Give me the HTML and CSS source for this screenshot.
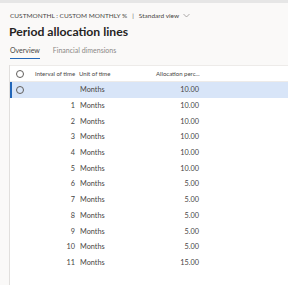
FILE: index.html
```html
<!DOCTYPE html>
<html>
<head>
  <title>Period allocation lines</title>
  <link rel="stylesheet" href="styles.css">
</head>
<body>
  <div class="topbar"></div>
  <div class="page-head">
    <div class="crumb">
      <span>CUSTMONTHL : CUSTOM MONTHLY %</span>
      <span class="sep">|</span>
      <span>Standard view</span>
      <svg class="chev" width="7" height="5" viewBox="0 0 7 5"><path d="M0.5 1 L3.5 4 L6.5 1" fill="none" stroke="#8a8886" stroke-width="0.7"/></svg>
    </div>
    <h1 class="title">Period allocation lines</h1>
    <div class="tabs">
      <span class="tab active">Overview</span>
      <span class="tab">Financial dimensions</span>
    </div>
  </div>

  <div class="body-wrap">
    <div class="side"></div>
    <div class="grid">
      <div class="row head">
        <div class="c-sel"><span class="radio"></span></div>
        <div class="c-int">Interval of time</div>
        <div class="c-unit">Unit of time</div>
        <div class="c-pct">Allocation perc...</div>
      </div>
      <div class="row selected">
        <div class="c-sel"><span class="radio"></span></div>
        <div class="c-int"></div>
        <div class="c-unit">Months</div>
        <div class="c-pct">10.00</div>
      </div>
      <div class="row"><div class="c-sel"></div><div class="c-int">1</div><div class="c-unit">Months</div><div class="c-pct">10.00</div></div>
      <div class="row"><div class="c-sel"></div><div class="c-int">2</div><div class="c-unit">Months</div><div class="c-pct">10.00</div></div>
      <div class="row"><div class="c-sel"></div><div class="c-int">3</div><div class="c-unit">Months</div><div class="c-pct">10.00</div></div>
      <div class="row"><div class="c-sel"></div><div class="c-int">4</div><div class="c-unit">Months</div><div class="c-pct">10.00</div></div>
      <div class="row"><div class="c-sel"></div><div class="c-int">5</div><div class="c-unit">Months</div><div class="c-pct">10.00</div></div>
      <div class="row"><div class="c-sel"></div><div class="c-int">6</div><div class="c-unit">Months</div><div class="c-pct">5.00</div></div>
      <div class="row"><div class="c-sel"></div><div class="c-int">7</div><div class="c-unit">Months</div><div class="c-pct">5.00</div></div>
      <div class="row"><div class="c-sel"></div><div class="c-int">8</div><div class="c-unit">Months</div><div class="c-pct">5.00</div></div>
      <div class="row"><div class="c-sel"></div><div class="c-int">9</div><div class="c-unit">Months</div><div class="c-pct">5.00</div></div>
      <div class="row"><div class="c-sel"></div><div class="c-int">10</div><div class="c-unit">Months</div><div class="c-pct">5.00</div></div>
      <div class="row"><div class="c-sel"></div><div class="c-int">11</div><div class="c-unit">Months</div><div class="c-pct">15.00</div></div>
    </div>
  </div>
</body>
</html>
```

FILE: styles.css
```css
html, body {
  margin: 0;
  padding: 0;
  height: 100%;
}

body {
  background: #faf9f8;
  font-family: Lato, "Noto Sans", sans-serif;
  color: #484644;
  overflow: hidden;
  display: flex;
  flex-direction: column;
}

.topbar {
  height: 3px;
  background: #e6e6e6;
}

/* Header */
.page-head {
  padding: 8px 0 0 10px;
  height: 62px;
  box-sizing: border-box;
}

.crumb {
  display: flex;
  align-items: center;
  gap: 4px;
  font-size: 6.5px;
  color: #484644;
  height: 9px;
}

.crumb .sep {
  color: #605e5c;
  margin: 0 1px;
}

.title {
  margin: 3px 0 0 -1px;
  font-size: 12.2px;
  font-weight: 700;
  line-height: 17px;
  color: #252423;
}

.tabs {
  display: flex;
  gap: 13px;
  margin-top: 6px;
  font-size: 7px;
  line-height: 9px;
}

.tab {
  color: #8a8886;
  padding-bottom: 4px;
  position: relative;
}

.tab.active {
  color: #484644;
}

.tab.active::after {
  content: "";
  position: absolute;
  left: 0;
  right: 0;
  bottom: 0;
  height: 1.5px;
  background: #2266b8;
}

/* Grid */
.body-wrap {
  flex: 1;
  display: flex;
}

.side {
  width: 9px;
  border-right: 1px solid #e1dfdd;
}

.grid {
  flex: 1;
  background: #fff;
  border-top: 1px solid #edebe9;
}

.row {
  display: flex;
  align-items: center;
  height: 15.7px;
  font-size: 7.3px;
  position: relative;
}

.row.head {
  height: 15px;
  font-size: 6px;
  border-bottom: 1px solid #edebe9;
  white-space: nowrap;
}

.row.selected {
  background: #d8e5f8;
}

.row.selected::before {
  content: "";
  position: absolute;
  left: 0;
  top: 0;
  bottom: 0;
  width: 2px;
  background: #2266b8;
}

.c-sel {
  width: 19px;
  display: flex;
  justify-content: center;
}

.radio {
  width: 8px;
  height: 8px;
  border: 1px solid #605e5c;
  border-radius: 50%;
  box-sizing: border-box;
}

.c-int {
  width: 49px;
  text-align: right;
  padding-right: 3px;
  box-sizing: border-box;
}

.row.head .c-int {
  text-align: left;
  padding-left: 6px;
  padding-right: 0;
}

.c-unit {
  width: 76px;
  padding-left: 2px;
  box-sizing: border-box;
}

.row.head .c-unit {
  padding-left: 1px;
}

.c-pct {
  width: 48px;
  text-align: right;
  padding-right: 3px;
  box-sizing: border-box;
}

.row.head .c-pct {
  text-align: left;
  padding-left: 2px;
  padding-right: 0;
}
```
